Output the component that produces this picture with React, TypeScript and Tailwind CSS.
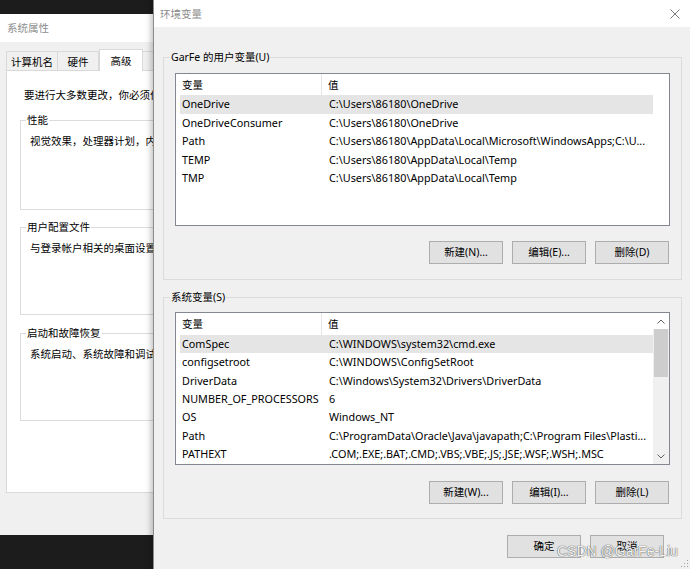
import React from "react"

const userVars = [
  ["OneDrive", "C:\\Users\\86180\\OneDrive"],
  ["OneDriveConsumer", "C:\\Users\\86180\\OneDrive"],
  ["Path", "C:\\Users\\86180\\AppData\\Local\\Microsoft\\WindowsApps;C:\\U..."],
  ["TEMP", "C:\\Users\\86180\\AppData\\Local\\Temp"],
  ["TMP", "C:\\Users\\86180\\AppData\\Local\\Temp"],
]

const sysVars = [
  ["ComSpec", "C:\\WINDOWS\\system32\\cmd.exe"],
  ["configsetroot", "C:\\WINDOWS\\ConfigSetRoot"],
  ["DriverData", "C:\\Windows\\System32\\Drivers\\DriverData"],
  ["NUMBER_OF_PROCESSORS", "6"],
  ["OS", "Windows_NT"],
  ["Path", "C:\\ProgramData\\Oracle\\Java\\javapath;C:\\Program Files\\Plasti..."],
  ["PATHEXT", ".COM;.EXE;.BAT;.CMD;.VBS;.VBE;.JS;.JSE;.WSF;.WSH;.MSC"],
]

function Btn({ label }: { label: string }) {
  return (
    <button className="w-[74px] h-[23px] bg-[#e1e1e1] border border-[#adadad] text-black leading-none flex items-center justify-center">
      {label}
    </button>
  )
}

function Chevron({ up }: { up?: boolean }) {
  return (
    <svg width="8" height="5" viewBox="0 0 8 5" className="text-[#606060]">
      <polyline
        points={up ? "0.5,4.5 4,1 7.5,4.5" : "0.5,0.5 4,4 7.5,0.5"}
        fill="none"
        stroke="currentColor"
        strokeWidth="1"
      />
    </svg>
  )
}

function VarList({ rows, headerH, rowH, scroll }: { rows: string[][]; headerH: string; rowH: string; scroll?: boolean }) {
  return (
    <div className="w-[495px] h-[153px] border border-[#828790] bg-white flex overflow-hidden text-[10.8px]">
      <div className="flex-1 flex flex-col pl-[4px] min-w-0">
        <div className={`grid grid-cols-[142px_1fr] items-center leading-[16px] text-[10.5px] ${headerH}`}>
          <div className="h-full flex items-center pl-[2px] border-r border-[#e5e5e5]">变量</div>
          <div className="pl-[6px]">值</div>
        </div>
        {rows.map((r, i) => (
          <div
            key={i}
            className={`grid grid-cols-[147px_1fr] items-center whitespace-nowrap leading-[16px] ${rowH} ${i === 0 ? "bg-[#e5e5e5]" : ""}`}
          >
            <div className="pl-[2px]">{r[0]}</div>
            <div className="pl-[2px] overflow-hidden">{r[1]}</div>
          </div>
        ))}
      </div>
      <div className="w-[16px] flex flex-col">
        {scroll && (
          <>
            <div className="h-[16px] flex items-center justify-center">
              <Chevron up />
            </div>
            <div className="flex-1 bg-[#f0f0f0] flex flex-col">
              <div className="h-[48px] mx-[1px] bg-[#cdcdcd]" />
            </div>
            <div className="h-[16px] flex items-center justify-center bg-[#f0f0f0]">
              <Chevron />
            </div>
          </>
        )}
      </div>
    </div>
  )
}

function PanelGroup({ title, text, className }: { title: string; text: string; className: string }) {
  return (
    <fieldset className={`ml-[13px] w-[320px] border border-[#dcdcdc] ${className}`}>
      <legend className="ml-[5px] px-[1px] leading-[16px]">{title}</legend>
      <div className="mt-[5px] pl-[9px] leading-[16px] whitespace-nowrap">{text}</div>
    </fieldset>
  )
}

export default function App() {
  return (
    <div className="relative w-[690px] h-[569px] overflow-hidden bg-[#1c1c1c] text-[10.5px] text-black font-['Noto_Sans','Noto_Sans_CJK_SC',sans-serif]">
      {/* 系统属性 window behind */}
      <div className="absolute left-0 top-[14px] w-[420px] h-[521px] bg-[#f0f0f0] flex flex-col">
        <div className="h-[28px] bg-white flex items-center pl-[7px] text-[#8d8d8d] leading-[16px]">系统属性</div>
        <div className="mt-[7px] h-[22px] flex items-end pl-[6px] leading-[16px]">
          <div className="w-[52px] h-[20px] border border-b-0 border-[#d9d9d9] flex items-center justify-center">计算机名</div>
          <div className="w-[41px] h-[20px] border border-b-0 border-l-0 border-[#d9d9d9] flex items-center justify-center">硬件</div>
          <div className="relative z-10 w-[44px] h-[22px] bg-white border border-b-0 border-[#d9d9d9] flex items-center justify-center">高级</div>
          <div className="w-[64px] h-[20px] border border-b-0 border-l-0 border-[#d9d9d9] flex items-center justify-center">系统保护</div>
        </div>
        <div className="-mt-px ml-[6px] h-[423px] bg-white border border-[#d9d9d9] pt-[16px]">
          <div className="pl-[17px] leading-[16px] whitespace-nowrap">要进行大多数更改，你必须作为管理员登录。</div>
          <PanelGroup className="mt-[9px] h-[98px]" title="性能" text="视觉效果，处理器计划，内存使用，以及虚拟内存" />
          <PanelGroup className="mt-[9px] h-[96px]" title="用户配置文件" text="与登录帐户相关的桌面设置" />
          <PanelGroup className="mt-[10px] h-[96px]" title="启动和故障恢复" text="系统启动、系统故障和调试信息" />
        </div>
      </div>

      {/* 环境变量 dialog */}
      <div className="absolute left-[153px] top-0 w-[537px] h-[569px] bg-[#f0f0f0] border-l border-[#8c8c8c] shadow-[-2px_0_6px_rgba(0,0,0,0.25)] flex flex-col">
        <div className="h-[27px] bg-white flex items-center justify-between pl-[6px] pr-[10px] leading-[16px]">
          <span className="text-[#8d8d8d]">环境变量</span>
          <svg width="10" height="10" viewBox="0 0 10 10">
            <path d="M0.5 0.5 L9.5 9.5 M9.5 0.5 L0.5 9.5" stroke="#7a7a7a" strokeWidth="1" fill="none" />
          </svg>
        </div>

        <fieldset className="mt-[22px] ml-[9px] w-[517px] border border-[#dcdcdc]">
          <legend className="ml-[6px] px-[1px] leading-[16px]">GarFe 的用户变量(U)</legend>
          <div className="px-[11px] pb-[15px]">
            <div className="mt-[8px]">
              <VarList rows={userVars} headerH="h-[21px]" rowH="h-[18.5px]" />
            </div>
            <div className="mt-[15px] flex justify-end gap-[9px] pr-[1px]">
              <Btn label="新建(N)..." />
              <Btn label="编辑(E)..." />
              <Btn label="删除(D)" />
            </div>
          </div>
        </fieldset>

        <fieldset className="mt-[9px] ml-[9px] w-[517px] border border-[#dcdcdc]">
          <legend className="ml-[6px] px-[1px] leading-[16px]">系统变量(S)</legend>
          <div className="px-[11px] pb-[14px]">
            <div className="mt-[7px]">
              <VarList rows={sysVars} headerH="h-[22px]" rowH="h-[18.3px]" scroll />
            </div>
            <div className="mt-[16px] flex justify-end gap-[9px] pr-[1px]">
              <Btn label="新建(W)..." />
              <Btn label="编辑(I)..." />
              <Btn label="删除(L)" />
            </div>
          </div>
        </fieldset>

        <div className="mt-[16px] flex justify-end gap-[9px] pr-[26px]">
          <Btn label="确定" />
          <Btn label="取消" />
        </div>
      </div>

      {/* resize grip */}
      <svg className="absolute right-[1px] bottom-[1px]" width="10" height="10" viewBox="0 0 10 10">
        <rect x="8" y="2" width="1" height="1" fill="#a0a0a0" />
        <rect x="5" y="5" width="1" height="1" fill="#a0a0a0" />
        <rect x="8" y="5" width="1" height="1" fill="#a0a0a0" />
        <rect x="2" y="8" width="1" height="1" fill="#a0a0a0" />
        <rect x="5" y="8" width="1" height="1" fill="#a0a0a0" />
        <rect x="8" y="8" width="1" height="1" fill="#a0a0a0" />
      </svg>

      {/* watermark */}
      <div className="absolute left-[557px] top-[542px] text-[14px] leading-[18px] whitespace-nowrap font-['Liberation_Sans',sans-serif] text-[#f4f4f4] [text-shadow:0_0_1px_#555,0_0_1px_#555]">
        CSDN @GarFe-Liu
      </div>
    </div>
  )
}
